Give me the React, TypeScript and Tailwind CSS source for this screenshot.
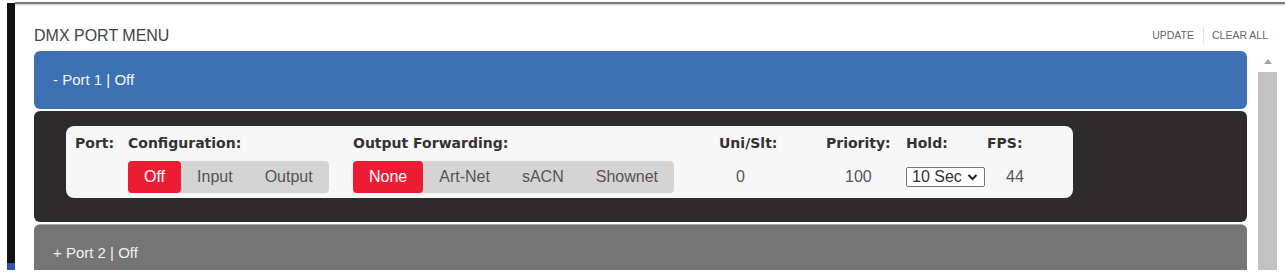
import React from "react";

type PortSectionProps = {
  label: string;
};

const labelCls = "font-['DejaVu_Sans',sans-serif] text-[14px] font-bold leading-[20px] text-[#333]";

function Segment({ options, active }: { options: string[]; active: string }) {
  return (
    <div className="flex h-[32px] rounded-[4px] bg-[#d4d4d4]">
      {options.map((opt) =>
        opt === active ? (
          <div
            key={opt}
            className="flex items-center rounded-[4px] bg-[#ec1c33] px-4 text-[16px] text-white"
          >
            {opt}
          </div>
        ) : (
          <div key={opt} className="flex items-center px-4 text-[16px] text-[#555]">
            {opt}
          </div>
        )
      )}
    </div>
  );
}

function PortCard() {
  return (
    <div className="flex w-[1007px] rounded-[8px] bg-[#f7f7f7] pb-[5px] pl-[9px] pt-[7px]">
      <div className="w-[53px]">
        <div className={labelCls}>Port:</div>
      </div>

      <div className="w-[201px]">
        <div className={labelCls}>Configuration:</div>
        <div className="mt-[8px]">
          <Segment options={["Off", "Input", "Output"]} active="Off" />
        </div>
      </div>

      <div className="ml-[24px] w-[321px]">
        <div className={labelCls}>Output Forwarding:</div>
        <div className="mt-[8px]">
          <Segment options={["None", "Art-Net", "sACN", "Shownet"]} active="None" />
        </div>
      </div>

      <div className="ml-[45px] w-[107px]">
        <div className={labelCls}>Uni/Slt:</div>
        <div className="mt-[8px] flex h-[32px] items-center pl-[17px] text-[16px] text-[#555]">0</div>
      </div>

      <div className="w-[80px]">
        <div className={labelCls}>Priority:</div>
        <div className="mt-[8px] flex h-[32px] items-center pl-[19px] text-[16px] text-[#555]">100</div>
      </div>

      <div className="w-[81px]">
        <div className={labelCls}>Hold:</div>
        <div className="mt-[8px] flex h-[32px] items-center">
          <div className="flex h-[20px] w-[79px] items-center justify-between rounded-[2px] border border-[#767676] bg-white pl-[5px] pr-[6px] text-[16px] leading-none text-[#333]">
            <span>10 Sec</span>
            <svg width="11" height="8" viewBox="0 0 11 8" fill="none">
              <path d="M1.5 2 L5.5 6 L9.5 2" stroke="#222" strokeWidth="2" />
            </svg>
          </div>
        </div>
      </div>

      <div>
        <div className={labelCls}>FPS:</div>
        <div className="mt-[8px] flex h-[32px] items-center pl-[19px] text-[16px] text-[#555]">44</div>
      </div>
    </div>
  );
}

function PortSection({ label }: PortSectionProps) {
  return (
    <div className="flex h-[58px] items-center rounded-[6px] bg-[#3d71b3] pl-[19px] text-[15px] text-[#f2f5fa]">
      {label}
    </div>
  );
}

export default function App() {
  return (
    <div className="flex h-[277px] w-[1285px] overflow-hidden bg-white pl-[7px] font-['Liberation_Sans',Arial,sans-serif]">
      <div className="mt-[3px] flex h-[267px] w-[8px] flex-col bg-[#121212]">
        <div className="mt-auto h-[7px] bg-[#2f58a6]" />
      </div>

      <div className="flex-1 pt-[2px]">
        <div className="h-[2px] bg-[#7a7a7a] shadow-[0_1px_2px_rgba(0,0,0,0.25)]" />

        <div className="flex h-[47px] items-end justify-between pb-[6px] pl-[19px] pr-[17px]">
          <div className="text-[16px] leading-[18px] text-[#444]">DMX PORT MENU</div>
          <div className="mb-[1px] flex items-center text-[10.5px] text-[#666]">
            <span className="pr-[9px]">UPDATE</span>
            <span className="h-[17px] w-px bg-[#e2e2e2]" />
            <span className="pl-[8px]">CLEAR ALL</span>
          </div>
        </div>

        <div className="flex h-[219px]">
          <div className="ml-[19px] w-[1213px] overflow-hidden">
            <PortSection label="- Port 1 | Off" />

            <div className="mt-[2px] h-[111px] rounded-[6px] bg-[#2d2b2b] pl-[32px] pt-[15px]">
              <PortCard />
            </div>

            <div className="mt-[2px] flex h-[58px] items-center rounded-[6px] border-t border-[#a8a8a8] bg-[#757575] pl-[19px] text-[15px] text-[#f2f2f2]">
              + Port 2 | Off
            </div>
          </div>

          <div className="ml-[11px] flex w-[19px] flex-col">
            <div className="flex h-[21px] items-center justify-center">
              <svg width="8" height="5" viewBox="0 0 8 5">
                <path d="M0 5 L4 0 L8 5 Z" fill="#a3a3a3" />
              </svg>
            </div>
            <div className="flex-1 bg-[#c2c2c2]" />
          </div>
        </div>
      </div>
    </div>
  );
}
